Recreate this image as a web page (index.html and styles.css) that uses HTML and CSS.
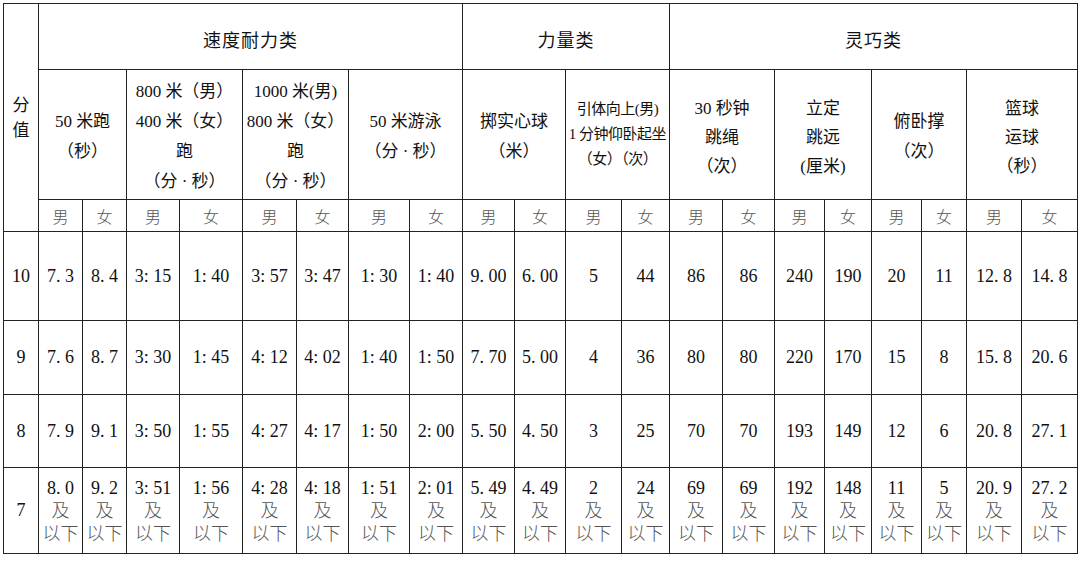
FILE: index.html
```html
<!DOCTYPE html>
<html lang="zh-CN">
<head>
<meta charset="utf-8">
<title>评分标准</title>
<link rel="stylesheet" href="styles.css">
</head>
<body>
<table class="score">
  <colgroup>
    <col class="c35"><col class="c44"><col class="c44"><col class="c53"><col class="c63"><col class="c54"><col class="c52"><col class="c61"><col class="c53"><col class="c52"><col class="c51"><col class="c56"><col class="c48"><col class="c53"><col class="c52"><col class="c50"><col class="c47"><col class="c50"><col class="c45"><col class="c55"><col class="c56">
  </colgroup>
  <tbody>
    <tr class="r-cat">
      <td rowspan="3" class="fenzhi">分<br>值</td>
      <td colspan="8" class="cat">速度耐力类</td>
      <td colspan="4" class="cat">力量类</td>
      <td colspan="8" class="cat">灵巧类</td>
    </tr>
    <tr class="r-item">
      <td colspan="2" class="item">50 米跑<br>（秒）</td>
      <td colspan="2" class="item">800 米（男）<br>400 米（女）<br>跑<br>（分 · 秒）</td>
      <td colspan="2" class="item">1000 米(男)<br>800 米（女）<br>跑<br>（分 · 秒）</td>
      <td colspan="2" class="item">50 米游泳<br>（分 · 秒）</td>
      <td colspan="2" class="item">掷实心球<br>（米）</td>
      <td colspan="2" class="item pull">引体向上(男)<br>1 分钟仰卧起坐<br>（女）（次）</td>
      <td colspan="2" class="item three">30 秒钟<br>跳绳<br>（次）</td>
      <td colspan="2" class="item three">立定<br>跳远<br>(厘米)</td>
      <td colspan="2" class="item">俯卧撑<br>（次）</td>
      <td colspan="2" class="item three">篮球<br>运球<br>（秒）</td>
    </tr>
    <tr class="r-sex">
      <td class="sex">男</td><td class="sex">女</td>
      <td class="sex">男</td><td class="sex">女</td>
      <td class="sex">男</td><td class="sex">女</td>
      <td class="sex">男</td><td class="sex">女</td>
      <td class="sex">男</td><td class="sex">女</td>
      <td class="sex">男</td><td class="sex">女</td>
      <td class="sex">男</td><td class="sex">女</td>
      <td class="sex">男</td><td class="sex">女</td>
      <td class="sex">男</td><td class="sex">女</td>
      <td class="sex">男</td><td class="sex">女</td>
    </tr>
    <tr class="r10">
      <td>10</td><td>7. 3</td><td>8. 4</td><td>3: 15</td><td>1: 40</td><td>3: 57</td><td>3: 47</td><td>1: 30</td><td>1: 40</td><td>9. 00</td><td>6. 00</td><td>5</td><td>44</td><td>86</td><td>86</td><td>240</td><td>190</td><td>20</td><td>11</td><td>12. 8</td><td>14. 8</td>
    </tr>
    <tr class="r9">
      <td>9</td><td>7. 6</td><td>8. 7</td><td>3: 30</td><td>1: 45</td><td>4: 12</td><td>4: 02</td><td>1: 40</td><td>1: 50</td><td>7. 70</td><td>5. 00</td><td>4</td><td>36</td><td>80</td><td>80</td><td>220</td><td>170</td><td>15</td><td>8</td><td>15. 8</td><td>20. 6</td>
    </tr>
    <tr class="r8">
      <td>8</td><td>7. 9</td><td>9. 1</td><td>3: 50</td><td>1: 55</td><td>4: 27</td><td>4: 17</td><td>1: 50</td><td>2: 00</td><td>5. 50</td><td>4. 50</td><td>3</td><td>25</td><td>70</td><td>70</td><td>193</td><td>149</td><td>12</td><td>6</td><td>20. 8</td><td>27. 1</td>
    </tr>
    <tr class="r7">
      <td>7</td>
      <td class="low">8. 0<br><span class="ji">及</span><br><span class="ji">以下</span></td>
      <td class="low">9. 2<br><span class="ji">及</span><br><span class="ji">以下</span></td>
      <td class="low">3: 51<br><span class="ji">及</span><br><span class="ji">以下</span></td>
      <td class="low">1: 56<br><span class="ji">及</span><br><span class="ji">以下</span></td>
      <td class="low">4: 28<br><span class="ji">及</span><br><span class="ji">以下</span></td>
      <td class="low">4: 18<br><span class="ji">及</span><br><span class="ji">以下</span></td>
      <td class="low">1: 51<br><span class="ji">及</span><br><span class="ji">以下</span></td>
      <td class="low">2: 01<br><span class="ji">及</span><br><span class="ji">以下</span></td>
      <td class="low">5. 49<br><span class="ji">及</span><br><span class="ji">以下</span></td>
      <td class="low">4. 49<br><span class="ji">及</span><br><span class="ji">以下</span></td>
      <td class="low">2<br><span class="ji">及</span><br><span class="ji">以下</span></td>
      <td class="low">24<br><span class="ji">及</span><br><span class="ji">以下</span></td>
      <td class="low">69<br><span class="ji">及</span><br><span class="ji">以下</span></td>
      <td class="low">69<br><span class="ji">及</span><br><span class="ji">以下</span></td>
      <td class="low">192<br><span class="ji">及</span><br><span class="ji">以下</span></td>
      <td class="low">148<br><span class="ji">及</span><br><span class="ji">以下</span></td>
      <td class="low">11<br><span class="ji">及</span><br><span class="ji">以下</span></td>
      <td class="low">5<br><span class="ji">及</span><br><span class="ji">以下</span></td>
      <td class="low">20. 9<br><span class="ji">及</span><br><span class="ji">以下</span></td>
      <td class="low">27. 2<br><span class="ji">及</span><br><span class="ji">以下</span></td>
    </tr>
  </tbody>
</table>
</body>
</html>
```
FILE: styles.css
```css
html, body {
  margin: 0;
  background: #fff;
}
body {
  padding: 3px 0 0 3px;
  font-family: "Liberation Serif", "Noto Sans CJK SC", serif;
  color: #111;
}
.score {
  border-collapse: collapse;
  table-layout: fixed;
  width: 1075px;
}
.score td {
  border: 1px solid #222;
  padding: 0;
  text-align: center;
  vertical-align: middle;
  font-size: 18px;
  white-space: nowrap;
  overflow: hidden;
}
.c35 { width: 35px; }
.c44 { width: 44px; }
.c45 { width: 45px; }
.c47 { width: 47px; }
.c48 { width: 48px; }
.c50 { width: 50px; }
.c51 { width: 51px; }
.c52 { width: 52px; }
.c53 { width: 53px; }
.c54 { width: 54px; }
.c55 { width: 55px; }
.c56 { width: 56px; }
.c61 { width: 61px; }
.c63 { width: 63px; }

.r-cat { height: 66px; }
.r-item { height: 130px; }
.r-sex { height: 32px; }
.r10 { height: 89px; }
.r9 { height: 74px; }
.r8 { height: 73px; }
.r7 { height: 86px; }

.score td.fenzhi {
  font-size: 17px;
  line-height: 25px;
}
.score td.cat {
  font-size: 18px;
  letter-spacing: 1px;
  padding-top: 4px;
}
.score td.item {
  font-size: 17px;
  line-height: 30px;
  padding-top: 5px;
}
.score td.item.three {
  line-height: 29px;
}
.score td.pull {
  font-size: 15px;
  letter-spacing: -0.5px;
  line-height: 25px;
  padding-top: 0;
}
.score td.sex {
  font-size: 16px;
  font-weight: 300;
  color: #555;
}
.score td.low {
  line-height: 23px;
  padding-top: 2px;
}
.ji {
  font-size: 18px;
  font-weight: 300;
  color: #555;
}
```
